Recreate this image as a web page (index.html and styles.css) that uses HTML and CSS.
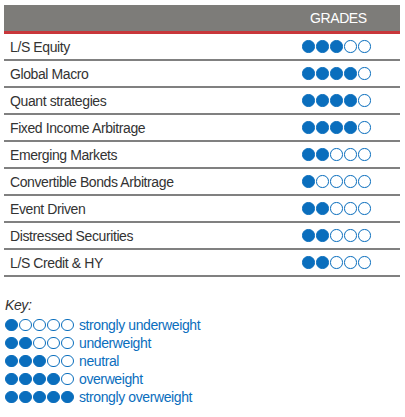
FILE: index.html
```html
<!DOCTYPE html>
<html>
<head>
<meta charset="utf-8">
<link rel="stylesheet" href="styles.css">
</head>
<body>
<div class="page">
  <div class="table">
    <div class="head">
      <div class="name"></div>
      <div class="grade head-title">GRADES</div>
    </div>
    <div class="row"><div class="name">L/S Equity</div><div class="grade"><span class="dot on"></span><span class="dot on"></span><span class="dot on"></span><span class="dot"></span><span class="dot"></span></div></div>
    <div class="row"><div class="name">Global Macro</div><div class="grade"><span class="dot on"></span><span class="dot on"></span><span class="dot on"></span><span class="dot on"></span><span class="dot"></span></div></div>
    <div class="row"><div class="name">Quant strategies</div><div class="grade"><span class="dot on"></span><span class="dot on"></span><span class="dot on"></span><span class="dot on"></span><span class="dot"></span></div></div>
    <div class="row"><div class="name">Fixed Income Arbitrage</div><div class="grade"><span class="dot on"></span><span class="dot on"></span><span class="dot on"></span><span class="dot on"></span><span class="dot"></span></div></div>
    <div class="row"><div class="name">Emerging Markets</div><div class="grade"><span class="dot on"></span><span class="dot on"></span><span class="dot"></span><span class="dot"></span><span class="dot"></span></div></div>
    <div class="row"><div class="name">Convertible Bonds Arbitrage</div><div class="grade"><span class="dot on"></span><span class="dot"></span><span class="dot"></span><span class="dot"></span><span class="dot"></span></div></div>
    <div class="row"><div class="name">Event Driven</div><div class="grade"><span class="dot on"></span><span class="dot on"></span><span class="dot"></span><span class="dot"></span><span class="dot"></span></div></div>
    <div class="row"><div class="name">Distressed Securities</div><div class="grade"><span class="dot on"></span><span class="dot on"></span><span class="dot"></span><span class="dot"></span><span class="dot"></span></div></div>
    <div class="row"><div class="name">L/S Credit &amp; HY</div><div class="grade"><span class="dot on"></span><span class="dot on"></span><span class="dot"></span><span class="dot"></span><span class="dot"></span></div></div>
  </div>
  <div class="key">
    <div class="key-title">Key:</div>
    <div class="key-row"><span class="dots"><span class="dot on"></span><span class="dot"></span><span class="dot"></span><span class="dot"></span><span class="dot"></span></span><span class="key-label">strongly underweight</span></div>
    <div class="key-row"><span class="dots"><span class="dot on"></span><span class="dot on"></span><span class="dot"></span><span class="dot"></span><span class="dot"></span></span><span class="key-label">underweight</span></div>
    <div class="key-row"><span class="dots"><span class="dot on"></span><span class="dot on"></span><span class="dot on"></span><span class="dot"></span><span class="dot"></span></span><span class="key-label">neutral</span></div>
    <div class="key-row"><span class="dots"><span class="dot on"></span><span class="dot on"></span><span class="dot on"></span><span class="dot on"></span><span class="dot"></span></span><span class="key-label">overweight</span></div>
    <div class="key-row"><span class="dots"><span class="dot on"></span><span class="dot on"></span><span class="dot on"></span><span class="dot on"></span><span class="dot on"></span></span><span class="key-label">strongly overweight</span></div>
  </div>
</div>
</body>
</html>
```
FILE: styles.css
```css
* { box-sizing: border-box; }
html, body { margin: 0; padding: 0; background: #fff; }
body {
  font-family: "Liberation Sans", Arial, sans-serif;
  font-size: 14px;
  letter-spacing: -0.4px;
  color: #333;
}
.page {
  padding: 5px 5px 0 4px;
}
.table {
  width: 396px;
}
.head {
  display: flex;
  height: 29px;
  background: #7d7c79;
  border-bottom: 3px solid #c8373b;
  align-items: center;
}
.name {
  flex: 1;
  padding-left: 6px;
}
.grade {
  width: 98px;
  display: flex;
  align-items: center;
}
.head-title {
  color: #fff;
  padding-left: 8px;
  padding-bottom: 1px;
}
.row {
  display: flex;
  align-items: center;
  height: 27px;
  border-bottom: 2px solid #808080;
}
.row .name {
  padding-top: 1px;
}
.dot {
  display: inline-block;
  width: 12.5px;
  height: 12.5px;
  border-radius: 50%;
  border: 1.3px solid #0a6ebd;
  background: #fff;
  margin-right: 1.5px;
  flex: none;
}
.dot.on {
  background: #0a6ebd;
}
.key {
  padding-top: 19px;
  padding-left: 1px;
}
.key-title {
  font-style: italic;
  color: #333;
  line-height: 18px;
  margin-bottom: 2px;
}
.key-row {
  display: flex;
  align-items: center;
  height: 18px;
}
.dots {
  display: flex;
  width: 74px;
}
.key-label {
  color: #0a6ebd;
}
```
